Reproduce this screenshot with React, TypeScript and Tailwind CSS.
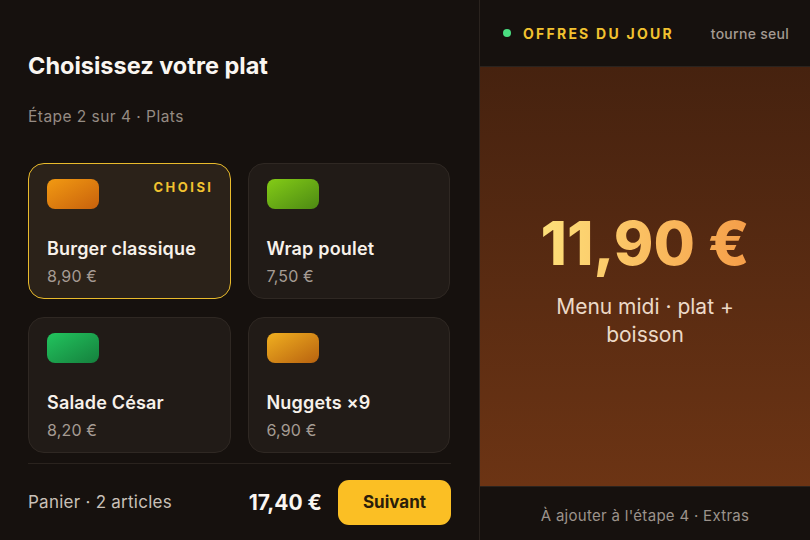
const dishes = [
  { name: 'Burger classique', price: '8,90 €', swatch: 'bg-gradient-to-br from-[#f29a12] to-[#c8610c]', selected: true },
  { name: 'Wrap poulet', price: '7,50 €', swatch: 'bg-gradient-to-br from-[#84cc16] to-[#4d8a13]', selected: false },
  { name: 'Salade César', price: '8,20 €', swatch: 'bg-gradient-to-br from-[#22c55e] to-[#15803d]', selected: false },
  { name: 'Nuggets ×9', price: '6,90 €', swatch: 'bg-gradient-to-br from-[#f0b020] to-[#b8620f]', selected: false },
];

function DishCard({ name, price, swatch, selected }: (typeof dishes)[number]) {
  return (
    <div
      className={
        selected
          ? 'relative h-[136px] rounded-2xl border border-[#e9bb2c] bg-[#2b2219] px-[18px] pt-[15px]'
          : 'relative h-[136px] rounded-2xl border border-[#2f2823] bg-[#211b17] px-[18px] pt-[15px]'
      }
    >
      <div className={`h-[30px] w-[52px] rounded-lg ${swatch}`} />
      {selected && (
        <span className="absolute right-[16px] top-[14px] text-[13px] font-bold tracking-[0.19em] text-[#f2c230]">
          CHOISI
        </span>
      )}
      <div className="mt-[28px] text-[18px] font-semibold leading-6 tracking-[0.01em] text-[#f7f1ea]">{name}</div>
      <div className="mt-[5px] text-[16px] leading-5 tracking-[0.01em] text-[#a59b93]">{price}</div>
    </div>
  );
}

export default function App() {
  return (
    <div
      className="flex h-[540px] w-[810px] overflow-hidden bg-[#16110e] text-white"
      style={{ fontFamily: 'Inter, "Noto Sans", sans-serif' }}
    >
      {/* Left: dish picker */}
      <div className="flex w-[480px] shrink-0 flex-col border-r border-[#2a231e] px-[28px]">
        <h1 className="mt-[51px] text-[23.5px] font-bold leading-[30px] text-[#faf6f1]">Choisissez votre plat</h1>
        <p className="mt-[26px] text-[15.5px] leading-5 tracking-[0.03em] text-[#958b83]">Étape 2 sur 4 · Plats</p>

        <div className="mt-[36px] grid grid-cols-2 gap-x-[17px] gap-y-[18px] pr-[1px]">
          {dishes.map((d) => (
            <DishCard key={d.name} {...d} />
          ))}
        </div>

        <div className="mt-[10px] border-t border-[#2a231e]" />

        <div className="mt-[16px] flex items-center">
          <span className="flex-1 text-[17px] tracking-[0.015em] text-[#c9c0b8]">Panier · 2 articles</span>
          <span className="mr-[16px] text-[21px] font-bold text-[#faf6f1]">17,40 €</span>
          <button className="h-[45px] w-[113px] rounded-[11px] bg-[#fbbf24] text-[17px] font-bold text-[#2a1d0a]">
            Suivant
          </button>
        </div>
      </div>

      {/* Right: offer of the day */}
      <div className="flex flex-1 flex-col">
        <div className="flex h-[67px] shrink-0 items-center border-b border-[#2a231e] pl-[23px] pr-[21px]">
          <span className="h-[8px] w-[8px] rounded-full bg-[#4ade80]" />
          <span className="ml-[12px] flex-1 text-[14px] font-bold tracking-[0.16em] text-[#f2c230]">
            OFFRES DU JOUR
          </span>
          <span className="text-[14px] font-medium tracking-[0.02em] text-[#a39a92]">tourne seul</span>
        </div>

        <div className="flex flex-1 flex-col items-center justify-center bg-gradient-to-b from-[#46220f] to-[#6c3414] pt-[4px]">
          <div className="bg-gradient-to-r from-[#fde07a] to-[#f59d48] bg-clip-text text-[60px] font-extrabold leading-[70px] text-transparent">
            11,90 €
          </div>
          <p className="mt-[15px] w-[230px] text-center text-[21px] leading-[28px] text-[#ecd9c7]">
            Menu midi · plat + boisson
          </p>
        </div>

        <div className="flex h-[54px] shrink-0 items-center justify-center border-t border-[#2a231e] pt-[5px] text-[15px] tracking-[0.02em] text-[#9c938b]">
          À ajouter à l'étape 4 · Extras
        </div>
      </div>
    </div>
  );
}
